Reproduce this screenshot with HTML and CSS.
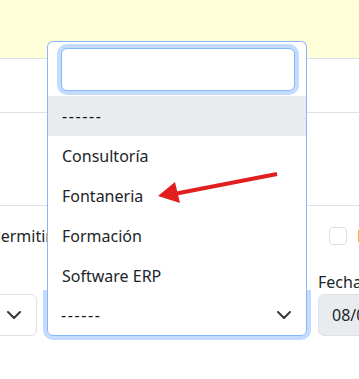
FILE: index.html
```html
<!DOCTYPE html>
<html lang="es">
<head>
  <meta charset="UTF-8" />
  <meta name="viewport" content="width=device-width, initial-scale=1.0"/>
  <title>Proyecto</title>
  <link rel="stylesheet" href="styles.css">
</head>
<body>
  <div class="page">
    <div class="notice"></div>
    <div class="band band-short"></div>
    <div class="band band-tall"></div>

    <div class="check-row">
      <div class="check-text">Permitir</div>
      <div class="spacer"></div>
      <div class="check">
        <span class="check-box"></span>
        <span class="check-label">Facturado</span>
      </div>
    </div>

    <div class="form-row">
      <div class="field">
        <div class="field-label">&nbsp;</div>
        <div class="select">
          <span class="select-value"></span>
          <svg class="chevron" width="14" height="8" viewBox="0 0 14 8"><path d="M1 1l6 6 6-6" /></svg>
        </div>
      </div>

      <div class="field">
        <div class="field-label">&nbsp;</div>
        <div class="s2">
          <div class="s2-dropdown">
            <div class="s2-search"><input class="s2-input" type="text" /></div>
            <ul class="s2-options">
              <li class="s2-option active"><span class="dash">------</span></li>
              <li class="s2-option">Consultoría</li>
              <li class="s2-option">Fontaneria</li>
              <li class="s2-option">Formación</li>
              <li class="s2-option">Software ERP</li>
            </ul>
          </div>
          <div class="s2-selection">
            <span class="select-value dash">------</span>
            <svg class="chevron" width="14" height="8" viewBox="0 0 14 8"><path d="M1 1l6 6 6-6" /></svg>
          </div>
        </div>
      </div>

      <div class="field field-date">
        <div class="field-label">Fecha inicio</div>
        <div class="date">08/09/2024</div>
      </div>
    </div>
  </div>

  <!-- flecha de anotación -->
  <svg class="arrow" width="359" height="379" viewBox="0 0 359 379">
    <line x1="277" y1="174" x2="174" y2="194" />
    <polygon points="158,196 175,182 180,203" />
  </svg>
</body>
</html>
```

FILE: styles.css
```css
html, body {
  margin: 0;
  overflow: hidden;
}
body {
  font-family: "Segoe UI", "Noto Sans", sans-serif;
  font-size: 16px;
  line-height: 24px;
  color: #212529;
  background-color: #fff;
  width: 359px;
  height: 379px;
  position: relative;
}
.notice {
  height: 58px;
  background-color: #fefed8;
  border-bottom: 1px solid #dee2e6;
}
.band {
  border-bottom: 1px solid #dee2e6;
}
.band-short {
  height: 53px;
}
.band-tall {
  height: 92px;
}
.check-row,
.form-row {
  display: grid;
  grid-template-columns: 100px 260px 150px;
  column-gap: 10px;
  margin-left: -63px;
}
.check-row {
  padding: 18px 0 22px;
  align-items: center;
}
.check-text {
  white-space: nowrap;
  margin-left: 54px;
}
.check {
  display: flex;
  align-items: center;
  gap: 10px;
  padding-left: 12px;
}
.check-box {
  width: 16px;
  height: 16px;
  border: 1px solid #dee2e6;
  border-radius: 4px;
  flex: none;
}
.check-label {
  color: #b35b1c;
}
.field-label {
  white-space: nowrap;
}
.field-date {
  padding-left: 1px;
}
.dash {
  letter-spacing: 1.6px;
  color: #111;
}
.select,
.s2-selection,
.date {
  height: 42px;
  box-sizing: border-box;
  border: 1px solid #dee2e6;
  border-radius: 6px;
  display: flex;
  align-items: center;
  justify-content: space-between;
  padding: 0 15px 0 13px;
}
.chevron path {
  fill: none;
  stroke: #343a40;
  stroke-width: 2;
  stroke-linecap: round;
  stroke-linejoin: round;
}
.s2 {
  position: relative;
}
.s2-selection {
  border-color: #86b7fe;
  border-top-left-radius: 0;
  border-top-right-radius: 0;
  box-shadow: 0 0 0 4px rgba(13, 110, 253, 0.25);
}
.s2-dropdown {
  position: absolute;
  left: 0;
  right: 0;
  bottom: calc(100% - 2px);
  z-index: 5;
  background: #fff;
  border: 1px solid #86b7fe;
  border-bottom: none;
  border-radius: 6px 6px 0 0;
}
.s2-search {
  padding: 6px 11px 5px 13px;
}
.s2-input {
  display: block;
  width: 100%;
  height: 43px;
  box-sizing: border-box;
  margin: 0;
  border: 1px solid #86b7fe;
  border-radius: 6px;
  box-shadow: 0 0 0 4px rgba(13, 110, 253, 0.25);
  outline: none;
  font: inherit;
}
.s2-options {
  list-style: none;
  margin: 0;
  padding: 0;
}
.s2-option {
  padding: 8px 14px;
}
.s2-option.active {
  background-color: #e9ecef;
}
.date {
  background-color: #e9ecef;
  justify-content: flex-start;
  padding-left: 13px;
}
.arrow {
  position: absolute;
  left: 0;
  top: 0;
  z-index: 10;
  pointer-events: none;
}
.arrow line {
  stroke: #e11f1f;
  stroke-width: 4;
}
.arrow polygon {
  fill: #e11f1f;
}
```
